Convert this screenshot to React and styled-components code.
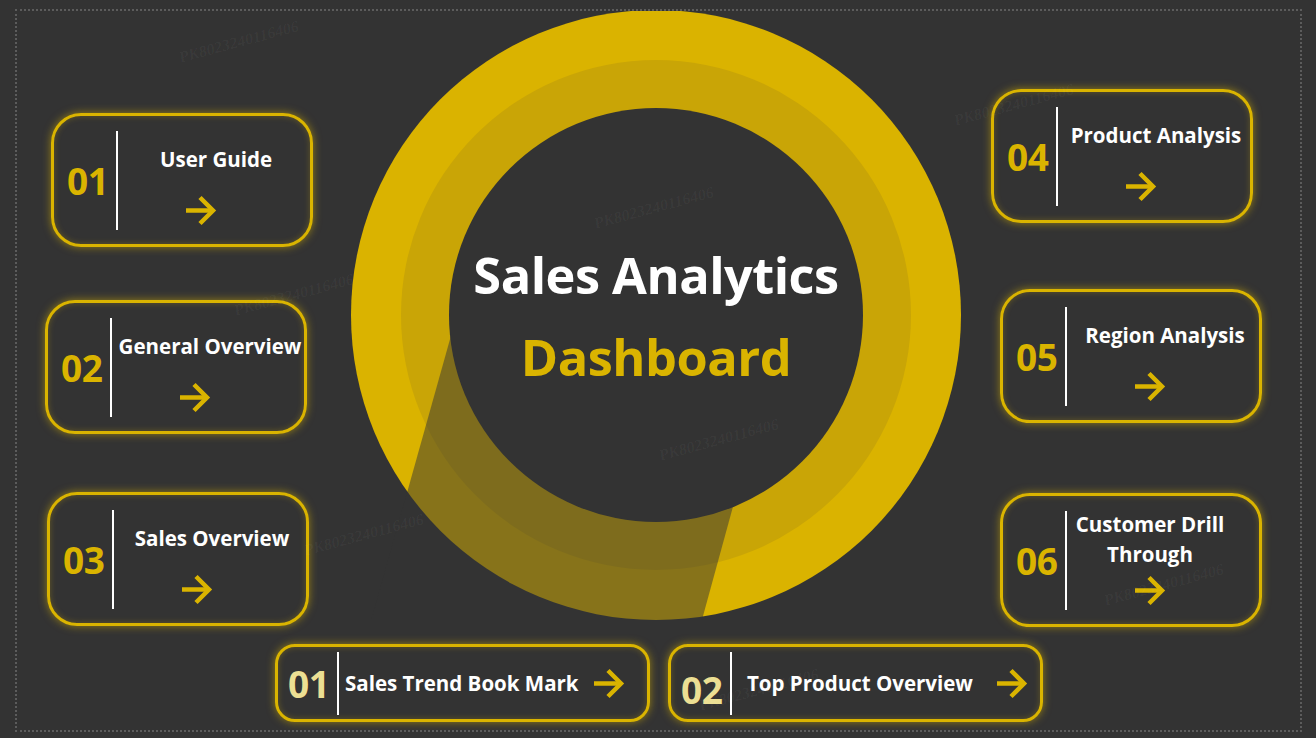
import React from "react";
import styled, { createGlobalStyle } from "styled-components";

const YELLOW = "#dab400";

const GlobalStyle = createGlobalStyle`
  html, body {
    margin: 0;
    padding: 0;
    background: #333333;
    overflow: hidden;
  }
  body {
    font-family: "Open Sans", "Liberation Sans", sans-serif;
  }
`;

const Frame = styled.div`
  position: relative;
  box-sizing: border-box;
  margin: 9px 0 0 15px;
  width: 1287px;
  height: 723px;
  border: 2px dotted #5c5c5c;
  display: flex;
  flex-direction: column;
  overflow: hidden;
`;

const MainRow = styled.div`
  display: flex;
  height: 622px;
`;

const SideColumn = styled.div`
  display: flex;
  flex-direction: column;
  width: ${({ $width }) => $width};
  flex: ${({ $grow }) => ($grow ? 1 : "none")};
`;

const Card = styled.div`
  box-sizing: border-box;
  width: 262px;
  height: 134px;
  margin-top: ${({ $mt }) => $mt}px;
  margin-left: ${({ $ml }) => $ml}px;
  border: 3px solid ${YELLOW};
  border-radius: 30px;
  box-shadow: 0 0 8px rgba(218, 180, 0, 0.6), inset 0 0 6px rgba(218, 180, 0, 0.3);
  display: flex;
  align-items: center;
  padding-left: 13px;
`;

const Num = styled.div`
  width: 49px;
  font-size: 37px;
  font-weight: 700;
  color: ${({ $pale }) => ($pale ? "#ecdf93" : YELLOW)};
  line-height: 1;
  letter-spacing: -0.5px;
  margin-top: ${({ $dy }) => $dy || 0}px;
`;

const Divider = styled.div`
  width: 2px;
  height: ${({ $h }) => $h}px;
  background: #ffffff;
`;

const CardBody = styled.div`
  flex: 1;
  align-self: stretch;
  display: flex;
  flex-direction: column;
  align-items: center;
  padding-top: 8px;
`;

const TitleBox = styled.div`
  height: 70px;
  display: flex;
  align-items: center;
  justify-content: center;
  text-align: center;
  color: #ffffff;
  font-size: 20.5px;
  font-weight: 700;
  line-height: 30px;
  white-space: nowrap;
  margin-left: ${({ $wrapped }) => ($wrapped ? 0 : 4)}px;
  margin-right: ${({ $wrapped }) => ($wrapped ? 26 : 0)}px;
`;

const ArrowWrap = styled.div`
  display: flex;
  margin-top: 1px;
  margin-right: 26px;
`;

const Ring = styled.div`
  width: 610px;
  height: 610px;
  margin-top: -1px;
  display: grid;
  & > * {
    grid-area: 1 / 1;
  }
`;

const Heading = styled.div`
  display: flex;
  flex-direction: column;
  align-items: center;
  justify-content: center;
  gap: 26px;
  padding-top: 2px;
  font-weight: 700;
`;

const HeadLine = styled.div`
  font-size: ${({ $size }) => $size}px;
  line-height: 1.1;
  color: ${({ $color }) => $color};
  letter-spacing: -0.5px;
`;

const BottomRow = styled.div`
  display: flex;
  gap: 18px;
  margin-top: 11px;
  padding-left: 258px;
`;

const Pill = styled.div`
  box-sizing: border-box;
  width: 375px;
  height: 78px;
  border: 3px solid ${YELLOW};
  border-radius: 20px;
  box-shadow: 0 0 8px rgba(218, 180, 0, 0.6), inset 0 0 6px rgba(218, 180, 0, 0.3);
  display: flex;
  align-items: center;
  padding-left: 10px;
`;

const PillText = styled.div`
  margin-left: ${({ $ml }) => $ml}px;
  color: #ffffff;
  font-size: 20.5px;
  font-weight: 700;
  white-space: nowrap;
`;

const PillArrow = styled.div`
  display: flex;
  margin-left: auto;
  margin-right: ${({ $mr }) => $mr}px;
`;

const Watermark = styled.div`
  position: absolute;
  left: ${({ $x }) => $x}px;
  top: ${({ $y }) => $y}px;
  transform: rotate(-15deg);
  font-family: "Liberation Serif", serif;
  font-style: italic;
  font-weight: 700;
  font-size: 16px;
  color: rgba(255, 255, 255, 0.04);
  pointer-events: none;
  white-space: nowrap;
`;

function Arrow() {
  return (
    <svg width="31" height="31" viewBox="0 0 31 31">
      <path d="M0 15.5h27" stroke={YELLOW} strokeWidth="4.5" fill="none" />
      <path d="M14 2.5l13 13-13 13" stroke={YELLOW} strokeWidth="4.5" fill="none" />
    </svg>
  );
}

function NavCard({ num, title, mt, ml, wrapped }) {
  return (
    <Card $mt={mt} $ml={ml}>
      <Num>{num}</Num>
      <Divider $h={99} />
      <CardBody>
        <TitleBox $wrapped={wrapped}>{title}</TitleBox>
        <ArrowWrap>
          <Arrow />
        </ArrowWrap>
      </CardBody>
    </Card>
  );
}

function BookCard({ num, text, textMl, arrowMr, numDy }) {
  return (
    <Pill>
      <Num $pale $dy={numDy}>{num}</Num>
      <Divider $h={63} />
      <PillText $ml={textMl}>{text}</PillText>
      <PillArrow $mr={arrowMr}>
        <Arrow />
      </PillArrow>
    </Pill>
  );
}

function RingArt() {
  return (
    <svg width="610" height="610" viewBox="0 0 610 610">
      <circle cx="305" cy="305" r="305" fill="#dab300" />
      <circle cx="305" cy="305" r="255" fill="#c9a506" />
      <polygon points="138,190 466,190 329,690 -2,690" fill="rgba(51,51,51,0.5)" />
      <circle cx="305" cy="305" r="207" fill="#333333" />
    </svg>
  );
}

const marks = [
  [160, 22], [575, 188], [215, 275], [640, 420], [285, 515],
  [935, 85], [1085, 565], [680, 670],
];

export default function App() {
  return (
    <>
      <GlobalStyle />
      <Frame>
        <MainRow>
          <SideColumn $width="334px">
            <NavCard num="01" title="User Guide" mt={102} ml={34} />
            <NavCard num="02" title="General Overview" mt={53} ml={28} />
            <NavCard num="03" title="Sales Overview" mt={58} ml={30} />
          </SideColumn>
          <Ring>
            <RingArt />
            <Heading>
              <HeadLine $size={50.5} $color="#ffffff">Sales Analytics</HeadLine>
              <HeadLine $size={50.5} $color={YELLOW}>Dashboard</HeadLine>
            </Heading>
          </Ring>
          <SideColumn $grow>
            <NavCard num="04" title="Product Analysis" mt={78} ml={30} />
            <NavCard num="05" title="Region Analysis" mt={66} ml={39} />
            <NavCard
              num="06"
              title={<span>Customer Drill<br />Through</span>}
              mt={70}
              ml={39}
              wrapped
            />
          </SideColumn>
        </MainRow>
        <BottomRow>
          <BookCard num="01" text="Sales Trend Book Mark" textMl={6} arrowMr={22} />
          <BookCard num="02" text="Top Product Overview" textMl={15} arrowMr={12} numDy={12} />
        </BottomRow>
        {marks.map(([x, y], i) => (
          <Watermark key={i} $x={x} $y={y}>PK8023240116406</Watermark>
        ))}
      </Frame>
    </>
  );
}
